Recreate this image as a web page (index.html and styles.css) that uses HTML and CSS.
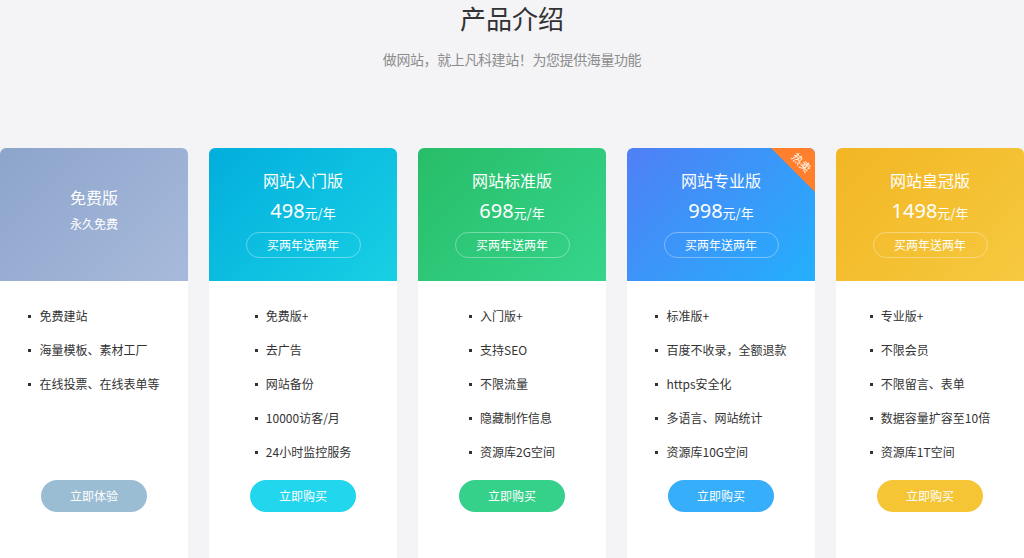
FILE: index.html
```html
<!DOCTYPE html>
<html lang="zh">
<head>
<meta charset="utf-8">
<title>产品介绍</title>
<link rel="stylesheet" href="styles.css">
</head>
<body>
<div class="page">
  <header class="intro">
    <h1 class="intro-title">产品介绍</h1>
    <p class="intro-sub">做网站，就上凡科建站！为您提供海量功能</p>
  </header>
  <section class="plans">
    <div class="card card-free">
      <div class="card-head head-free">
        <div class="plan-name">免费版</div>
        <div class="plan-note">永久免费</div>
      </div>
      <div class="card-body">
        <ul class="features">
          <li>免费建站</li>
          <li>海量模板、素材工厂</li>
          <li>在线投票、在线表单等</li>
        </ul>
        <div class="btn btn-free">立即体验</div>
      </div>
    </div>
    <div class="card">
      <div class="card-head head-basic">
        <div class="plan-name">网站入门版</div>
        <div class="plan-price"><span class="num">498</span><span class="unit">元/年</span></div>
        <div class="plan-promo">买两年送两年</div>
      </div>
      <div class="card-body">
        <ul class="features">
          <li>免费版+</li>
          <li>去广告</li>
          <li>网站备份</li>
          <li>10000访客/月</li>
          <li>24小时监控服务</li>
        </ul>
        <div class="btn btn-basic">立即购买</div>
      </div>
    </div>
    <div class="card">
      <div class="card-head head-std">
        <div class="plan-name">网站标准版</div>
        <div class="plan-price"><span class="num">698</span><span class="unit">元/年</span></div>
        <div class="plan-promo">买两年送两年</div>
      </div>
      <div class="card-body">
        <ul class="features">
          <li>入门版+</li>
          <li>支持SEO</li>
          <li>不限流量</li>
          <li>隐藏制作信息</li>
          <li>资源库2G空间</li>
        </ul>
        <div class="btn btn-std">立即购买</div>
      </div>
    </div>
    <div class="card">
      <div class="card-head head-pro">
        <div class="plan-name">网站专业版</div>
        <div class="plan-price"><span class="num">998</span><span class="unit">元/年</span></div>
        <div class="plan-promo">买两年送两年</div>
        <div class="hot"><span class="hot-text">热卖</span></div>
      </div>
      <div class="card-body">
        <ul class="features">
          <li>标准版+</li>
          <li>百度不收录，全额退款</li>
          <li>https安全化</li>
          <li>多语言、网站统计</li>
          <li>资源库10G空间</li>
        </ul>
        <div class="btn btn-pro">立即购买</div>
      </div>
    </div>
    <div class="card">
      <div class="card-head head-crown">
        <div class="plan-name">网站皇冠版</div>
        <div class="plan-price"><span class="num">1498</span><span class="unit">元/年</span></div>
        <div class="plan-promo">买两年送两年</div>
      </div>
      <div class="card-body">
        <ul class="features">
          <li>专业版+</li>
          <li>不限会员</li>
          <li>不限留言、表单</li>
          <li>数据容量扩容至10倍</li>
          <li>资源库1T空间</li>
        </ul>
        <div class="btn btn-crown">立即购买</div>
      </div>
    </div>
  </section>
</div>
</body>
</html>
```

FILE: styles.css
```css
html, body {
  margin: 0;
  padding: 0;
  background: #f4f4f7;
  overflow: hidden;
}
body {
  font-family: "Noto Sans CJK SC", "Liberation Sans", sans-serif;
  color: #333;
  width: 1024px;
  height: 558px;
}
.page {
  width: 1024px;
}
.intro {
  text-align: center;
  padding-top: 2px;
}
.intro-title {
  margin: 0;
  font-size: 26px;
  font-weight: 400;
  line-height: 32px;
  color: #333;
}
.intro-sub {
  margin: 15px 0 0;
  font-size: 14px;
  line-height: 20px;
  color: #8c8c8c;
  letter-spacing: -0.4px;
}
.plans {
  display: flex;
  gap: 21px;
  margin-top: 79px;
}
.card {
  width: 188px;
  flex: none;
  border-radius: 6px 6px 0 0;
  overflow: hidden;
  background: #fff;
}
.card-head {
  position: relative;
  height: 133px;
  box-sizing: border-box;
  padding-top: 20px;
  display: flex;
  flex-direction: column;
  align-items: center;
  color: #fff;
  overflow: hidden;
}
.head-free {
  padding-top: 37px;
  background: linear-gradient(135deg, #8da4cb 0%, #a7badb 100%);
}
.head-basic { background: linear-gradient(135deg, #02aedd 0%, #18d0e4 100%); }
.head-std { background: linear-gradient(135deg, #28bd68 0%, #35d58c 100%); }
.head-pro { background: linear-gradient(135deg, #507ff6 0%, #23b0fc 100%); }
.head-crown { background: linear-gradient(135deg, #f2b624 0%, #f6c93f 100%); }
.plan-name {
  font-size: 16px;
  line-height: 24px;
}
.plan-note {
  font-size: 12px;
  line-height: 16px;
  margin-top: 7px;
}
.plan-price {
  margin-top: 6px;
  line-height: 26px;
  height: 26px;
}
.plan-price .num {
  font-size: 20px;
  font-family: "Noto Sans", "Noto Sans CJK SC", sans-serif;
}
.plan-price .unit {
  font-size: 13px;
}
.plan-promo {
  margin-top: 8px;
  width: 115px;
  height: 26px;
  box-sizing: border-box;
  border: 1px solid rgba(255, 255, 255, 0.35);
  border-radius: 13px;
  font-size: 12px;
  line-height: 24px;
  text-align: center;
}
.hot {
  position: absolute;
  top: 0;
  right: 0;
  width: 44px;
  height: 44px;
  background: #ff7f2c;
  clip-path: polygon(0 0, 100% 0, 100% 100%);
}
.hot-text {
  position: absolute;
  left: 1px;
  top: 7px;
  width: 60px;
  line-height: 14px;
  font-size: 11px;
  text-align: center;
  color: #fff;
  transform: rotate(45deg);
}
.card-body {
  height: 320px;
  padding-top: 18px;
  display: flex;
  flex-direction: column;
  align-items: center;
}
.features {
  list-style: none;
  margin: 0;
  padding: 0;
  height: 170px;
}
.features li {
  position: relative;
  padding-left: 11px;
  font-size: 12px;
  line-height: 34px;
  color: #333;
  white-space: nowrap;
}
.features li::before {
  content: "";
  position: absolute;
  left: 0;
  top: 16px;
  width: 3px;
  height: 3px;
  background: #333;
}
.btn {
  margin-top: 11px;
  width: 106px;
  height: 32px;
  border-radius: 16px;
  color: #fff;
  font-size: 12px;
  line-height: 32px;
  text-align: center;
}
.btn-free { background: #9bbdd3; }
.btn-basic { background: #22d6ee; }
.btn-std { background: #35d08a; }
.btn-pro { background: #36aefa; }
.btn-crown { background: #f5c535; }
```
